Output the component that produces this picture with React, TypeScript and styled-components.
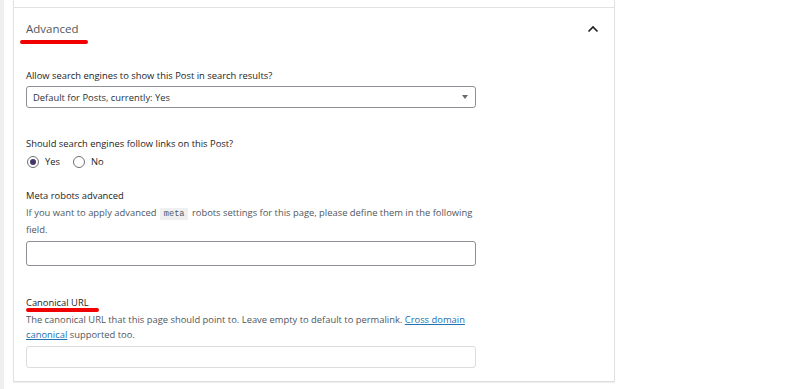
import styled, { createGlobalStyle } from "styled-components";

const GlobalStyle = createGlobalStyle`
  body {
    margin: 0;
    background: #fff;
    font-family: "Open Sans", "Noto Sans", sans-serif;
    color: #1e1e1e;
  }
`;

const Page = styled.div`
  display: flex;
  height: 389px;
  background: #fff;
`;

const Gutter = styled.div`
  width: 4px;
  background: #efeff0;
`;

const Frame = styled.div`
  box-sizing: border-box;
  width: 602px;
  height: 382px;
  margin-left: 9px;
  border-left: 1px solid #e2e2e2;
  border-right: 1px solid #e2e2e2;
  border-bottom: 1px solid #dcdcdc;
  box-shadow: 0 1px 1px rgba(0, 0, 0, 0.06);
  display: flex;
  flex-direction: column;
`;

const PrevSection = styled.div`
  height: 7px;
  border-bottom: 1px solid #e2e2e2;
`;

const Section = styled.div`
  padding: 0 15px 0 12px;
  display: flex;
  flex-direction: column;
`;

const Header = styled.div`
  display: flex;
  align-items: center;
  justify-content: space-between;
  margin-top: 13px;
  height: 16px;
`;

const Title = styled.span`
  font-size: 11.5px;
  color: #50575e;
  line-height: 16px;
`;

const Mark = styled.div<{ $w: number; $x: number; $top: number }>`
  width: ${(p) => p.$w}px;
  height: 4px;
  margin-left: ${(p) => p.$x}px;
  margin-top: ${(p) => p.$top}px;
  border-radius: 2px;
  background: #f00000;
`;

const Label = styled.div<{ $top: number; $strong?: boolean }>`
  margin-top: ${(p) => p.$top}px;
  font-size: 9.4px;
  line-height: 15px;
  font-weight: ${(p) => (p.$strong ? 500 : 400)};
  color: #1e1e1e;
`;

const Desc = styled.div<{ $top: number }>`
  margin-top: ${(p) => p.$top}px;
  max-width: 450px;
  font-size: 9.4px;
  line-height: 15px;
  color: #50575e;
`;

const Code = styled.code`
  font-family: "Liberation Mono", "DejaVu Sans Mono", monospace;
  font-size: 8.6px;
  background: #f0f0f1;
  color: #50575e;
  padding: 1px 4px;
  margin: 0 1px;
`;

const Link = styled.a`
  color: #2271b1;
  text-decoration: underline;
`;

const Select = styled.div`
  box-sizing: border-box;
  margin-top: 3px;
  width: 450px;
  height: 22px;
  border: 1px solid #8c8f94;
  border-radius: 3px;
  display: flex;
  align-items: center;
  justify-content: space-between;
  padding: 0 7px 0 6px;
  font-size: 9.4px;
  color: #2c3338;
`;

const Caret = styled.span`
  width: 0;
  height: 0;
  border-left: 3px solid transparent;
  border-right: 3px solid transparent;
  border-top: 4px solid #6a6a6a;
`;

const Input = styled.div<{ $top: number; $h: number; $light?: boolean }>`
  box-sizing: border-box;
  margin-top: ${(p) => p.$top}px;
  width: 450px;
  height: ${(p) => p.$h}px;
  border: 1px solid ${(p) => (p.$light ? "#dcdcde" : "#8c8f94")};
  border-radius: 3px;
  background: #fff;
`;

const RadioRow = styled.div`
  margin-top: 3px;
  display: flex;
  align-items: center;
  height: 15px;
  font-size: 9.4px;
  color: #1e1e1e;
`;

const Radio = styled.span<{ $on?: boolean }>`
  box-sizing: border-box;
  width: 12px;
  height: 12px;
  margin: 0 6px 0 1px;
  border: 1px solid #6f6f6f;
  border-radius: 50%;
  display: inline-flex;
  align-items: center;
  justify-content: center;
  &::after {
    content: "";
    width: 6px;
    height: 6px;
    border-radius: 50%;
    background: ${(p) => (p.$on ? "#44386a" : "transparent")};
  }
`;

const Option = styled.span`
  margin-right: 12px;
`;

const ChevronUp = () => (
  <svg width="12" height="8" viewBox="0 0 12 8">
    <path d="M1.5 6.5 L6 2 L10.5 6.5" fill="none" stroke="#1e1e1e" strokeWidth="1.6" />
  </svg>
);

export default function App() {
  return (
    <>
      <GlobalStyle />
      <Page>
        <Gutter />
        <Frame>
          <PrevSection />
          <Section>
            <Header>
              <Title>Advanced</Title>
              <ChevronUp />
            </Header>
            <Mark $w={68} $x={-6} $top={3} />

            <Label $top={24}>Allow search engines to show this Post in search results?</Label>
            <Select>
              <span>Default for Posts, currently: Yes</span>
              <Caret />
            </Select>

            <Label $top={28}>Should search engines follow links on this Post?</Label>
            <RadioRow>
              <Radio $on />
              <Option>Yes</Option>
              <Radio />
              <Option>No</Option>
            </RadioRow>

            <Label $top={19} $strong>Meta robots advanced</Label>
            <Desc $top={2}>
              If you want to apply advanced <Code>meta</Code> robots settings for this page, please define them in the
              following field.
            </Desc>
            <Input $top={4} $h={25} />

            <Label $top={29} $strong>Canonical URL</Label>
            <Mark $w={73} $x={0} $top={-2} />
            <Desc $top={0}>
              The canonical URL that this page should point to. Leave empty to default to permalink.{" "}
              <Link>Cross domain canonical</Link> supported too.
            </Desc>
            <Input $top={4} $h={22} $light />
          </Section>
        </Frame>
      </Page>
    </>
  );
}
